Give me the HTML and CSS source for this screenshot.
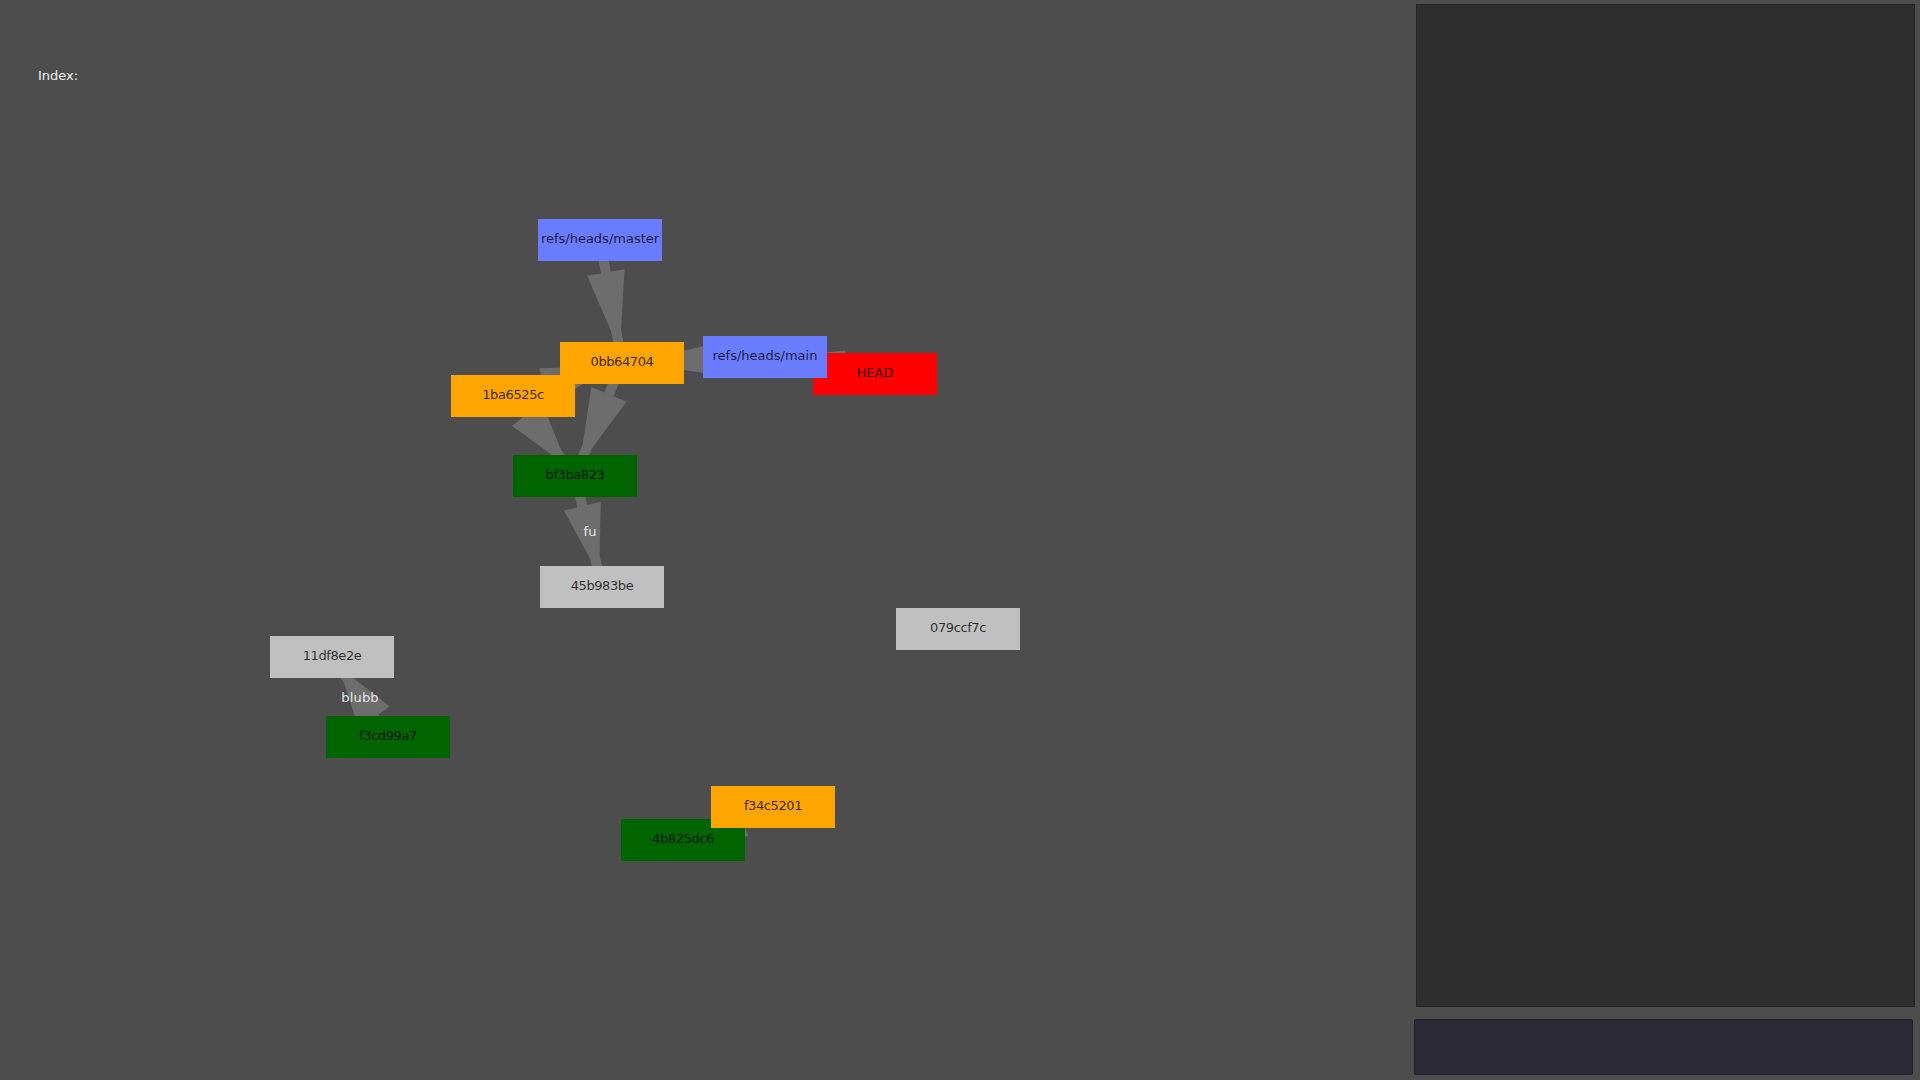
FILE: index.html
```html
<!DOCTYPE html>
<html>
<head>
<meta charset="utf-8">
<title>Git graph</title>
<link rel="stylesheet" href="styles.css">
</head>
<body>
<main class="stage">
  <div class="index-label">Index:</div>
  <svg class="edges" width="1414" height="1080" viewBox="0 0 1414 1080">
    <g class="edge" transform="translate(600 240) rotate(79.86)">
      <rect x="0" y="-5" width="124.95" height="10"/><polygon points="33,-19 33,19 112.95,0"/>
    </g>
    <g class="edge" transform="translate(765 357) rotate(177.6)">
      <rect x="0" y="-5" width="143.13" height="10"/><polygon points="33,-19 33,19 131.13,0"/>
    </g>
    <g class="edge" transform="translate(875 374) rotate(-171.21)">
      <rect x="0" y="-5" width="111.3" height="10"/><polygon points="33,-19 33,19 99.3,0"/>
    </g>
    <g class="edge" transform="translate(513 396) rotate(-16.84)">
      <rect x="0" y="-5" width="113.9" height="10"/><polygon points="33,-19 33,19 101.9,0"/>
    </g>
    <g class="edge" transform="translate(622 363) rotate(112.59)">
      <rect x="0" y="-5" width="122.4" height="10"/><polygon points="34,-19 34,19 110.4,0"/>
    </g>
    <g class="edge" transform="translate(513 396) rotate(52.22)">
      <rect x="0" y="-5" width="101.2" height="10"/><polygon points="23,-19 23,19 89.2,0"/>
    </g>
    <g class="edge" transform="translate(575 476) rotate(76.33)">
      <rect x="0" y="-5" width="114.2" height="10"/><polygon points="31,-19 31,19 102.2,0"/>
    </g>
    <g class="edge" transform="translate(388 737) rotate(-124.99)">
      <rect x="0" y="-5" width="97.65" height="10"/><polygon points="24,-19 24,19 85.65,0"/>
    </g>
    <g class="edge" transform="translate(773 807) rotate(159.86)">
      <rect x="0" y="-5" width="95.86" height="10"/><polygon points="33,-19 33,19 83.86,0"/>
    </g>
  </svg>

  <div class="edge-label label-fu">fu</div>
  <div class="edge-label label-blubb">blubb</div>

  <div class="node ref n-master">refs/heads/master</div>
  <div class="node commit hash n-1ba">1ba6525c</div>
  <div class="node commit hash n-0bb">0bb64704</div>
  <div class="node head n-head">HEAD</div>
  <div class="node ref n-main">refs/heads/main</div>
  <div class="node tree hash n-bf3">bf3ba823</div>
  <div class="node blob hash n-45b">45b983be</div>
  <div class="node blob hash n-079">079ccf7c</div>
  <div class="node blob hash n-11d">11df8e2e</div>
  <div class="node tree hash n-f3c">f3cd99a7</div>
  <div class="node tree hash n-4b8">4b825dc6</div>
  <div class="node commit hash n-f34">f34c5201</div>
</main>
<aside class="sidebar">
  <section class="panel-main"></section>
  <section class="panel-input"></section>
</aside>
</body>
</html>
```
FILE: styles.css
```css
html, body {
  margin: 0;
  padding: 0;
  height: 100%;
}
body {
  display: flex;
  width: 1920px;
  height: 1080px;
  overflow: hidden;
  background: #4d4d4d;
  font-family: "DejaVu Sans", "Liberation Sans", sans-serif;
  font-size: 13px;
  color: #eeeeee;
}
.stage {
  position: relative;
  width: 1414px;
  height: 1080px;
  flex: none;
}
.index-label {
  padding: 68px 0 0 38px;
  font-size: 13px;
  line-height: 15px;
  color: #f0f0f0;
}
.edges {
  position: absolute;
  left: 0;
  top: 0;
}
.edge rect, .edge polygon {
  fill: #6d6d6d;
}
.edge-label {
  position: absolute;
  transform: translate(-50%, -50%);
  font-size: 13px;
  line-height: 15px;
  color: #e6e6e6;
  white-space: nowrap;
}
.label-fu { left: 590px; top: 531px; }
.label-blubb { left: 360px; top: 697px; letter-spacing: 0.2px; }

.node {
  position: absolute;
  width: 124px;
  height: 42px;
  display: flex;
  align-items: center;
  justify-content: center;
  padding-bottom: 4px;
  box-sizing: border-box;
  font-size: 13px;
  color: rgba(0, 0, 0, 0.78);
  white-space: nowrap;
}
.hash { letter-spacing: -0.4px; }
.ref { background: #6a7cff; }
.commit { background: #ffa500; }
.head { background: #ff0000; }
.tree { background: #006400; }
.blob { background: #c0c0c0; }

.n-master { left: 538px; top: 219px; }
.n-0bb { left: 560px; top: 342px; }
.n-main { left: 703px; top: 336px; }
.n-head { left: 813px; top: 353px; }
.n-1ba { left: 451px; top: 375px; }
.n-bf3 { left: 513px; top: 455px; }
.n-45b { left: 540px; top: 566px; }
.n-079 { left: 896px; top: 608px; }
.n-11d { left: 270px; top: 636px; }
.n-f3c { left: 326px; top: 716px; }
.n-f34 { left: 711px; top: 786px; }
.n-4b8 { left: 621px; top: 819px; }

.sidebar {
  flex: none;
  width: 506px;
  display: flex;
  flex-direction: column;
  padding: 4px 0 5px 0;
  box-sizing: border-box;
  gap: 12px;
}
.panel-main {
  height: 1003px;
  margin: 0 5px 0 2px;
  background: #2e2e2e;
  border: 1px solid #242424;
  box-sizing: border-box;
}
.panel-input {
  height: 56px;
  margin: 0 7px 0 0;
  background: #2c2a36;
  border: 1px solid #212121;
  border-radius: 2px;
  box-sizing: border-box;
}
```
